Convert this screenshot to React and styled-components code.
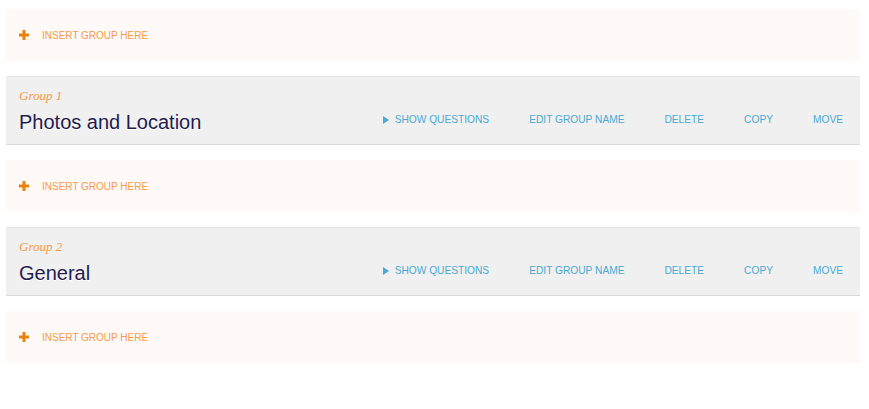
import React from "react";
import styled, { createGlobalStyle } from "styled-components";

const Global = createGlobalStyle`
  html, body { margin: 0; padding: 0; background: #ffffff; }
  body { font-family: "Liberation Sans", Arial, sans-serif; }
`;

const Page = styled.div`
  width: 854px;
  margin: 9px 0 0 6px;
  display: flex;
  flex-direction: column;
  gap: 15px;
`;

const InsertBar = styled.div`
  height: 52px;
  background: #fffaf7;
  display: flex;
  align-items: center;
  padding-left: 13px;
  gap: 13px;
  box-sizing: border-box;
`;

const InsertText = styled.span`
  font-size: 10px;
  color: #f39a4c;
  text-transform: uppercase;
  margin-top: 1px;
`;

const Group = styled.div`
  height: 69px;
  box-sizing: border-box;
  background: #f0f0f0;
  border-top: 1px solid #e6e6e6;
  border-bottom: 1px solid #dadada;
  display: flex;
  justify-content: space-between;
  align-items: flex-end;
  padding: 0 17px 11px 13px;
`;

const Titles = styled.div`
  display: flex;
  flex-direction: column;
  gap: 7px;
`;

const GroupLabel = styled.span`
  font-family: "Liberation Serif", "Times New Roman", serif;
  font-style: italic;
  font-size: 13px;
  color: #f39a3e;
`;

const GroupTitle = styled.span`
  font-size: 20px;
  color: #1f1b4d;
  text-shadow: 0 1px 0 #ffffff;
  line-height: 22px;
`;

const Actions = styled.div`
  display: flex;
  align-items: center;
  gap: 40px;
  margin-bottom: 8px;
`;

const Action = styled.span`
  display: flex;
  align-items: center;
  gap: 6px;
  font-size: 10.2px;
  color: #4aaad4;
  text-transform: uppercase;
`;

const Plus = () => (
  <svg width="10" height="10" viewBox="0 0 10 10">
    <path d="M3.5 0h3v3.5H10v3H6.5V10h-3V6.5H0v-3h3.5z" fill="#e8820f" />
  </svg>
);

const Tri = () => (
  <svg width="6" height="8" viewBox="0 0 6 8">
    <path d="M0 0L6 4L0 8z" fill="#4aaad4" />
  </svg>
);

const Insert = () => (
  <InsertBar>
    <Plus />
    <InsertText>Insert group here</InsertText>
  </InsertBar>
);

const GroupRow = ({ n, title }) => (
  <Group>
    <Titles>
      <GroupLabel>Group {n}</GroupLabel>
      <GroupTitle>{title}</GroupTitle>
    </Titles>
    <Actions>
      <Action><Tri />Show questions</Action>
      <Action>Edit group name</Action>
      <Action>Delete</Action>
      <Action>Copy</Action>
      <Action>Move</Action>
    </Actions>
  </Group>
);

export default function App() {
  return (
    <>
      <Global />
      <Page>
        <Insert />
        <GroupRow n={1} title="Photos and Location" />
        <Insert />
        <GroupRow n={2} title="General" />
        <Insert />
      </Page>
    </>
  );
}
